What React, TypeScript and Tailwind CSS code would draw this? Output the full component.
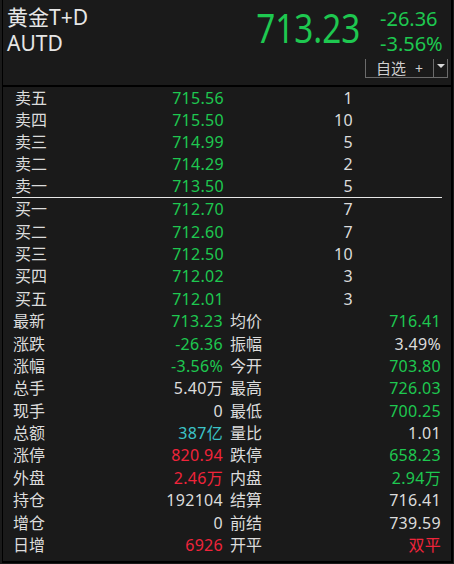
import React from 'react';

type Side = { label: string; price: string; qty: string };
type Stat = { label: string; value: string; color: string };

const GREEN = 'text-[#1ec850]';
const RED = 'text-[#f0243a]';
const WHITE = 'text-[#dcdcdc]';
const CYAN = 'text-[#3cc3c8]';

const asks: Side[] = [
  { label: '卖五', price: '715.56', qty: '1' },
  { label: '卖四', price: '715.50', qty: '10' },
  { label: '卖三', price: '714.99', qty: '5' },
  { label: '卖二', price: '714.29', qty: '2' },
  { label: '卖一', price: '713.50', qty: '5' },
];

const bids: Side[] = [
  { label: '买一', price: '712.70', qty: '7' },
  { label: '买二', price: '712.60', qty: '7' },
  { label: '买三', price: '712.50', qty: '10' },
  { label: '买四', price: '712.02', qty: '3' },
  { label: '买五', price: '712.01', qty: '3' },
];

const stats: [Stat, Stat][] = [
  [{ label: '最新', value: '713.23', color: GREEN }, { label: '均价', value: '716.41', color: GREEN }],
  [{ label: '涨跌', value: '-26.36', color: GREEN }, { label: '振幅', value: '3.49%', color: WHITE }],
  [{ label: '涨幅', value: '-3.56%', color: GREEN }, { label: '今开', value: '703.80', color: GREEN }],
  [{ label: '总手', value: '5.40万', color: WHITE }, { label: '最高', value: '726.03', color: GREEN }],
  [{ label: '现手', value: '0', color: WHITE }, { label: '最低', value: '700.25', color: GREEN }],
  [{ label: '总额', value: '387亿', color: CYAN }, { label: '量比', value: '1.01', color: WHITE }],
  [{ label: '涨停', value: '820.94', color: RED }, { label: '跌停', value: '658.23', color: GREEN }],
  [{ label: '外盘', value: '2.46万', color: RED }, { label: '内盘', value: '2.94万', color: GREEN }],
  [{ label: '持仓', value: '192104', color: WHITE }, { label: '结算', value: '716.41', color: WHITE }],
  [{ label: '增仓', value: '0', color: WHITE }, { label: '前结', value: '739.59', color: WHITE }],
  [{ label: '日增', value: '6926', color: RED }, { label: '开平', value: '双平', color: RED }],
];

function BookRow({ row, h }: { row: Side; h: string }) {
  return (
    <div className={`flex items-center ${h}`}>
      <div className="flex w-[221px] justify-between pl-[12px]">
        <span className={WHITE}>{row.label}</span>
        <span className={`${GREEN} tracking-[0.3px]`}>{row.price}</span>
      </div>
      <span className={`w-[129px] text-right tracking-[0.3px] ${WHITE}`}>{row.qty}</span>
    </div>
  );
}

export default function App() {
  return (
    <div
      className="w-[454px] h-[564px] bg-[#1a1a1a] pl-[2px] pr-[1px] pb-[1px] text-[16px]"
      style={{ fontFamily: '"Noto Sans", "Noto Sans CJK SC", sans-serif' }}
    >
      <div className="h-full border-l border-r-2 border-b-2 border-black flex flex-col">
        {/* header */}
        <div className="h-[87px] shrink-0 flex border-b-2 border-black text-[#e6e6e6]">
          <div className="pl-[4px] pt-[4px] text-[21px] leading-[26px]">
            <div>黄金T+D</div>
            <div>AUTD</div>
          </div>
          <div className="ml-auto flex flex-col">
            <div className="flex">
              <span className={`inline-block pt-[8px] text-[40px] leading-[40px] origin-right scale-x-[0.83] ${GREEN}`}>
                713.23
              </span>
              <div className={`ml-[20px] w-[71px] pt-[6px] text-[20px] leading-[25px] ${GREEN}`}>
                <div>-26.36</div>
                <div>-3.56%</div>
              </div>
            </div>
            <div className="self-end mr-[3px] mt-[3px] flex h-[19px] w-[83px] border-l border-r border-b border-[#6b6b6b] text-[#cfcfcf]">
              <div className="flex w-[68px] items-end border-r border-[#6b6b6b] pl-[10px] text-[15px] leading-[17px]">
                <span>自选</span>
                <span className="ml-[9px] text-[14px]">+</span>
              </div>
              <div className="flex flex-1 justify-center pt-[5px]">
                <div className="h-0 w-0 border-l-[4px] border-r-[4px] border-t-[4px] border-l-transparent border-r-transparent border-t-[#d8d8d8]" />
              </div>
            </div>
          </div>
        </div>

        {/* order book */}
        <div className="leading-[20px]">
          {asks.map((r) => (
            <BookRow key={r.label} row={r} h="h-[22px]" />
          ))}
          <div className="mx-[9px] h-px bg-[#e6e6e6]" />
          {bids.map((r) => (
            <BookRow key={r.label} row={r} h="h-[22.4px]" />
          ))}
        </div>

        {/* quote stats */}
        <div className="leading-[20px]">
          {stats.map(([l, r]) => (
            <div key={l.label} className="flex h-[22.4px] items-center">
              <div className="flex w-[220px] justify-between pl-[10px]">
                <span className={WHITE}>{l.label}</span>
                <span className={`${l.color} tracking-[0.3px]`}>{l.value}</span>
              </div>
              <div className="ml-[7px] flex w-[211px] justify-between">
                <span className={WHITE}>{r.label}</span>
                <span className={`${r.color} tracking-[0.3px]`}>{r.value}</span>
              </div>
            </div>
          ))}
        </div>
      </div>
    </div>
  );
}
